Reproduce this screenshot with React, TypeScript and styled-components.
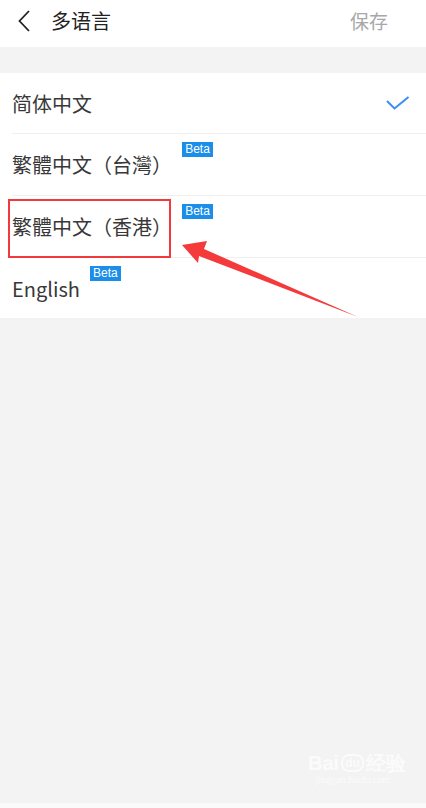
import React from "react";
import styled, { createGlobalStyle } from "styled-components";

interface Language {
  id: string;
  label: string;
  beta: boolean;
}

const languages: Language[] = [
  { id: "zh-CN", label: "简体中文", beta: false },
  { id: "zh-TW", label: "繁體中文（台灣）", beta: true },
  { id: "zh-HK", label: "繁體中文（香港）", beta: true },
  { id: "en", label: "English", beta: true },
];

const GlobalStyle = createGlobalStyle`
  html, body {
    margin: 0;
    padding: 0;
    background: #f3f3f3;
  }
  body {
    font-family: "Noto Sans CJK SC", "Noto Sans", sans-serif;
  }
`;

const App: React.FC = () => {
  const selected = "zh-CN";

  return (
    <Page>
      <GlobalStyle />
      <Header>
        <BackButton>
          <svg width="14" height="22" viewBox="0 0 14 22">
            <path d="M11 1 L1.5 11 L11 21" fill="none" stroke="#222" strokeWidth="1.8" />
          </svg>
        </BackButton>
        <Title>多语言</Title>
        <SaveButton>保存</SaveButton>
      </Header>

      <Gap />

      <List>
        {languages.map((lang) => (
          <Row key={lang.id}>
            <Label>{lang.label}</Label>
            {lang.beta ? <Badge>Beta</Badge> : null}
            {selected === lang.id ? (
              <Check>
                <svg width="24" height="14" viewBox="0 0 24 14">
                  <path d="M1 5 L8.5 12.5 L22.5 1" fill="none" stroke="#3a8ef2" strokeWidth="2" />
                </svg>
              </Check>
            ) : null}
          </Row>
        ))}
      </List>

      <Highlight />
      <Arrow width="426" height="808" viewBox="0 0 426 808">
        <polygon
          points="182,245 207,241 204,249 358,317 199,256 198,263"
          fill="#f43a3a"
        />
      </Arrow>

      <Watermark>
        <WaterLogo>Bai<Paw>du</Paw>经验</WaterLogo>
        <WaterUrl>jingyan.baidu.com</WaterUrl>
      </Watermark>

      <Footer />
    </Page>
  );
};

const Page = styled.div`
  position: relative;
  width: 426px;
  height: 808px;
  background: #f3f3f3;
  display: flex;
  flex-direction: column;
  overflow: hidden;
`;

const Header = styled.div`
  height: 47px;
  background: #fff;
  display: flex;
  align-items: center;
  padding: 0 38px 0 18px;
  box-sizing: border-box;
`;

const BackButton = styled.div`
  display: flex;
  align-items: center;
  width: 33px;
  margin-top: -6px;
`;

const Title = styled.div`
  font-size: 20px;
  color: #222;
  flex: 1;
  margin-top: -6px;
`;

const SaveButton = styled.div`
  font-size: 19px;
  color: #a8a8a8;
  margin-top: -6px;
`;

const Gap = styled.div`
  height: 26px;
`;

const List = styled.div`
  background: #fff;
  padding-left: 12px;
`;

const Row = styled.div`
  position: relative;
  height: 62px;
  display: flex;
  align-items: center;
  border-bottom: 1px solid #efefef;
  box-sizing: border-box;

  &:first-child {
    height: 61px;
  }

  &:last-child {
    border-bottom: none;
    height: 60px;
  }
`;

const Label = styled.div`
  font-size: 20px;
  color: #383838;
`;

const Badge = styled.div`
  align-self: flex-start;
  margin: 8px 0 0 10px;
  width: 31px;
  height: 15px;
  background: #1b8ee9;
  color: #fff;
  font-family: "Liberation Sans", Arial, sans-serif;
  font-size: 12px;
  line-height: 15px;
  text-align: center;
`;

const Check = styled.div`
  margin-left: auto;
  margin-right: 16px;
  display: flex;
`;

const Highlight = styled.div`
  position: absolute;
  left: 8px;
  top: 199px;
  width: 163px;
  height: 59px;
  border: 2px solid #f2393b;
  box-sizing: border-box;
`;

const Arrow = styled.svg`
  position: absolute;
  left: 0;
  top: 0;
`;

const Watermark = styled.div`
  position: absolute;
  left: 308px;
  top: 752px;
  display: flex;
  flex-direction: column;
  align-items: center;
  color: #fff;
  opacity: 0.7;
`;

const WaterLogo = styled.div`
  font-family: "Liberation Sans", Arial, sans-serif;
  font-weight: bold;
  font-size: 20px;
  line-height: 22px;
  display: flex;
  align-items: center;
`;

const Paw = styled.span`
  font-size: 12px;
  border: 2px solid #fff;
  border-radius: 8px;
  padding: 0 2px;
  margin: 0 2px;
  line-height: 14px;
`;

const WaterUrl = styled.div`
  font-family: "Liberation Serif", serif;
  font-size: 10px;
  margin-left: -8px;
`;

const Footer = styled.div`
  margin-top: auto;
  height: 5px;
  background: #fafafa;
`;

export default App;
